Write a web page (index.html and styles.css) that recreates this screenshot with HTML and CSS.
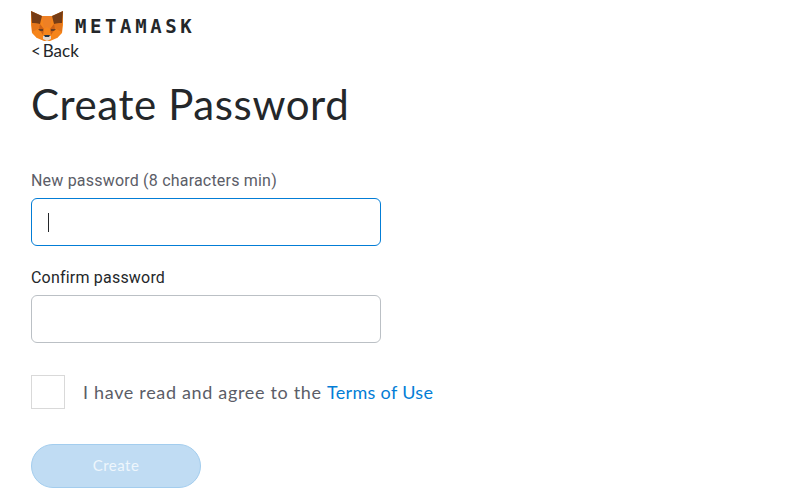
FILE: index.html
```html
<!DOCTYPE html>
<html lang="en">
<head>
    <meta charset="UTF-8">
    <meta name="viewport" content="width=device-width, initial-scale=1.0">
    <title>Create Password</title>
    <link rel="stylesheet" href="styles.css">
</head>
<body>
    <div class="container">
        <div class="logo-row">
            <svg class="fox" viewBox="0 0 32 30" width="32" height="30" aria-hidden="true">
                <!-- head -->
                <polygon points="0,0 11,5 21,5 32,0 32,14 31,22 26,27 19,30 13,30 6,27 1,22 0,14" fill="#f6851b"/>
                <!-- ears -->
                <polygon points="0,0 11,5 9,13 1,12" fill="#763d16"/>
                <polygon points="32,0 21,5 23,13 31,12" fill="#763d16"/>
                <!-- cheeks -->
                <polygon points="1,12 9,13 9,17 1,21" fill="#e4761b"/>
                <polygon points="31,12 23,13 23,17 31,21" fill="#e4761b"/>
                <polygon points="1,21 9,19 12,26 6,27" fill="#f6851b"/>
                <polygon points="31,21 23,19 20,26 26,27" fill="#f6851b"/>
                <polygon points="11,5 21,5 19,18 16,16 13,18" fill="#ee8025"/>
                <polygon points="9,13 13,18 12,24 8,18" fill="#cd6116"/>
                <polygon points="23,13 19,18 20,24 24,18" fill="#cd6116"/>
                <!-- eyes -->
                <polygon points="7,18 12,18 12,20 9,20" fill="#6b3f20"/>
                <polygon points="25,18 20,18 20,20 23,20" fill="#6b3f20"/>
                <!-- muzzle and nose -->
                <polygon points="12,25 20,25 20,28 16,30 12,28" fill="#e4d6cb"/>
                <polygon points="13,24 19,24 18,26 14,26" fill="#233447"/>
            </svg>
            <span class="wordmark">METAMASK</span>
        </div>
        <a href="#" class="back">&lt; Back</a>
        <h1 class="title">Create Password</h1>

        <label class="field-label label-muted">New password (8 characters min)</label>
        <div class="field field-focus"><span class="caret"></span></div>

        <label class="field-label label-confirm">Confirm password</label>
        <div class="field"></div>

        <div class="terms">
            <div class="checkbox"></div>
            <span class="terms-text">I have read and agree to the <a href="#">Terms of Use</a></span>
        </div>

        <a href="#" class="button">Create</a>
    </div>
</body>
</html>
```

FILE: styles.css
```css
body {
    font-family: Lato, "Open Sans", sans-serif;
    background-color: #fff;
    color: #24272a;
    margin: 0;
}
.container {
    padding: 11px 0 0 31px;
}
.logo-row {
    display: flex;
    align-items: center;
    height: 30px;
}
.fox {
    display: block;
}
.wordmark {
    font-family: "DejaVu Sans Mono", monospace;
    font-size: 19px;
    font-weight: bold;
    letter-spacing: 3.6px;
    color: #24272a;
    margin-left: 12px;
}
.back {
    display: block;
    font-size: 17px;
    line-height: 20px;
    word-spacing: -2.5px;
    color: #24272a;
    text-decoration: none;
}
.title {
    font-size: 42px;
    font-weight: 400;
    line-height: 50px;
    letter-spacing: 0.6px;
    margin: 18px 0 0;
    color: #24272a;
}
.field-label {
    display: block;
    font-family: Roboto, sans-serif;
    font-size: 16px;
    line-height: 20px;
    letter-spacing: 0.2px;
}
.label-muted {
    margin-top: 42px;
    color: #5b5d67;
}
.label-confirm {
    margin-top: 22px;
    color: #24272a;
}
.field {
    display: flex;
    align-items: center;
    box-sizing: border-box;
    width: 350px;
    height: 48px;
    margin-top: 7px;
    padding-left: 16px;
    border: 1px solid #bbc0c5;
    border-radius: 6px;
    background-color: #fff;
}
.field-focus {
    border-color: #037dd6;
}
.caret {
    width: 1px;
    height: 19px;
    background-color: #24272a;
}
.terms {
    display: flex;
    align-items: center;
    margin-top: 32px;
}
.checkbox {
    box-sizing: border-box;
    width: 34px;
    height: 34px;
    border: 1px solid #d9d9d9;
    background-color: #fff;
}
.terms-text {
    margin-left: 18px;
    font-size: 18px;
    letter-spacing: 0.67px;
    color: #5b5d67;
}
.terms-text a {
    color: #037dd6;
    letter-spacing: 0.32px;
    text-decoration: none;
}
.button {
    display: block;
    box-sizing: border-box;
    width: 170px;
    height: 44px;
    margin-top: 35px;
    border: 1px solid #a3cdee;
    border-radius: 22px;
    background-color: #c0dcf3;
    color: #eef6fc;
    font-size: 15px;
    font-weight: 400;
    letter-spacing: 0.5px;
    line-height: 40px;
    text-align: center;
    text-decoration: none;
}
```
